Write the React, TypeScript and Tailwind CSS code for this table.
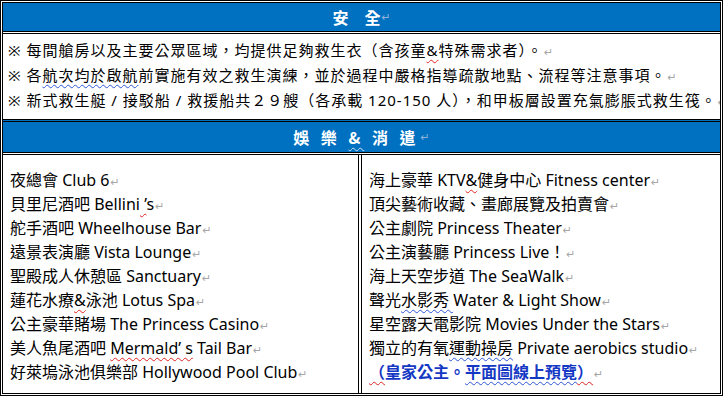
import React from 'react';

type Part = string | { t: string; w: 'red' | 'blue' | 'white' };

const bodyFont = "font-['Noto_Sans','Noto_Sans_CJK_TC',sans-serif]";

function Mark({ onBlue }: { onBlue?: boolean }) {
  return (
    <span
      className={`ml-[1px] align-baseline font-['DejaVu_Sans',sans-serif] text-[11px] leading-none font-normal tracking-normal ${
        onBlue ? 'text-[#8fb3d9]' : 'text-[#a6a6a6]'
      }`}
    >
      ↵
    </span>
  );
}

function Wavy({ color, children }: { color: 'red' | 'blue' | 'white'; children: React.ReactNode }) {
  return (
    <span
      className={`underline decoration-wavy decoration-1 underline-offset-[3px] ${
        color === 'red'
          ? 'decoration-[#e02424]'
          : color === 'blue'
          ? 'decoration-[#2f55d4]'
          : 'decoration-[#cfe0f5]'
      }`}
    >
      {children}
    </span>
  );
}

function Line({ parts, h }: { parts: Part[]; h: string }) {
  return (
    <div className={`whitespace-pre overflow-visible ${h}`}>
      {parts.map((p, i) =>
        typeof p === 'string' ? (
          <React.Fragment key={i}>{p}</React.Fragment>
        ) : (
          <Wavy key={i} color={p.w}>
            {p.t}
          </Wavy>
        )
      )}
      <Mark />
    </div>
  );
}

const safety: Part[][] = [
  ['※ 每間艙房以及主要公眾區域，均提供足夠救生衣（含孩童', { t: '&', w: 'red' }, '特殊需求者）。'],
  ['※ 各', { t: '航次均於啟航', w: 'blue' }, '前實施有效之救生演練，並於過程中嚴格指導疏散地點、流程等注意事項。'],
  ['※ 新式救生艇 / 接駁船 / 救援船共２９艘（各承載 120-150 人），和甲板層設置充氣膨脹式救生筏。'],
];

const leftItems: Part[][] = [
  ['夜總會 Club 6'],
  ['貝里尼酒吧 Bellini', { t: ' ’', w: 'red' }, 's'],
  ['舵手酒吧 Wheelhouse Bar'],
  ['遠景表演廳 Vista Lounge'],
  ['聖殿成人休憩區 Sanctuary'],
  ['蓮花水療', { t: '&', w: 'red' }, '泳池 Lotus Spa'],
  ['公主豪華賭場 The Princess Casino'],
  ['美人魚尾酒吧 ', { t: 'Mermald’ s', w: 'red' }, ' Tail Bar'],
  ['好萊塢泳池俱樂部 Hollywood Pool Club'],
];

const rightItems: Part[][] = [
  ['海上豪華 KTV', { t: '&', w: 'red' }, '健身中心 Fitness center'],
  ['頂尖藝術收藏、畫廊展覽及拍賣會'],
  ['公主劇院 Princess Theater'],
  ['公主演藝廳 Princess Live！'],
  ['海上天空步道 The SeaWalk'],
  ['聲光', { t: '水影秀 ', w: 'blue' }, 'Water & Light Show'],
  ['星空露天電影院 Movies Under the Stars'],
  ['獨立的有氧', { t: '運動操房', w: 'blue' }, ' Private aerobics studio'],
];

export default function App() {
  return (
    <div className="w-[723px] h-[396px] bg-white flex flex-col border-[3px] border-double border-black overflow-hidden text-black">
      {/* 安全 header */}
      <div className="h-[28px] shrink-0 bg-[#0070c0] flex items-center justify-center font-['Noto_Sans_CJK_TC',sans-serif] text-[16px] font-bold text-white">
        <span>安　全</span>
        <Mark onBlue />
      </div>

      {/* safety notes */}
      <div
        className={`h-[88px] shrink-0 border-t-[3px] border-double border-black pt-[4px] pl-[5px] text-[15px] leading-[25px] tracking-[1px] overflow-hidden ${bodyFont}`}
      >
        {safety.map((parts, i) => (
          <Line key={i} parts={parts} h="h-[25px]" />
        ))}
      </div>

      {/* 娛樂 & 消遣 header */}
      <div className="h-[33px] shrink-0 border-t-[3px] border-double border-black bg-[#0070c0] flex items-center justify-center font-['Noto_Sans_CJK_TC',sans-serif] text-[16px] font-bold text-white">
        <span className="tracking-[4px] whitespace-pre">
          娛 樂 <Wavy color="white">&amp;</Wavy> 消 遣
        </span>
        <Mark onBlue />
      </div>

      {/* entertainment list */}
      <div className={`flex-1 flex border-t-[3px] border-double border-black text-[16px] leading-[24px] ${bodyFont}`}>
        <div className="w-[359px] shrink-0 border-r-[4px] border-double border-black pt-[13px] pl-[7px]">
          {leftItems.map((parts, i) => (
            <Line key={i} parts={parts} h="h-[24px]" />
          ))}
        </div>
        <div className="flex-1 pt-[13px] pl-[7px]">
          {rightItems.map((parts, i) => (
            <Line key={i} parts={parts} h="h-[24px]" />
          ))}
          <div className="h-[24px] whitespace-pre font-bold text-[#1438c4]">
            <Wavy color="red">（</Wavy>皇家公主。<Wavy color="blue">平面圖線上預覽</Wavy>
            <Wavy color="red">）</Wavy>
            <Mark />
          </div>
        </div>
      </div>
    </div>
  );
}
